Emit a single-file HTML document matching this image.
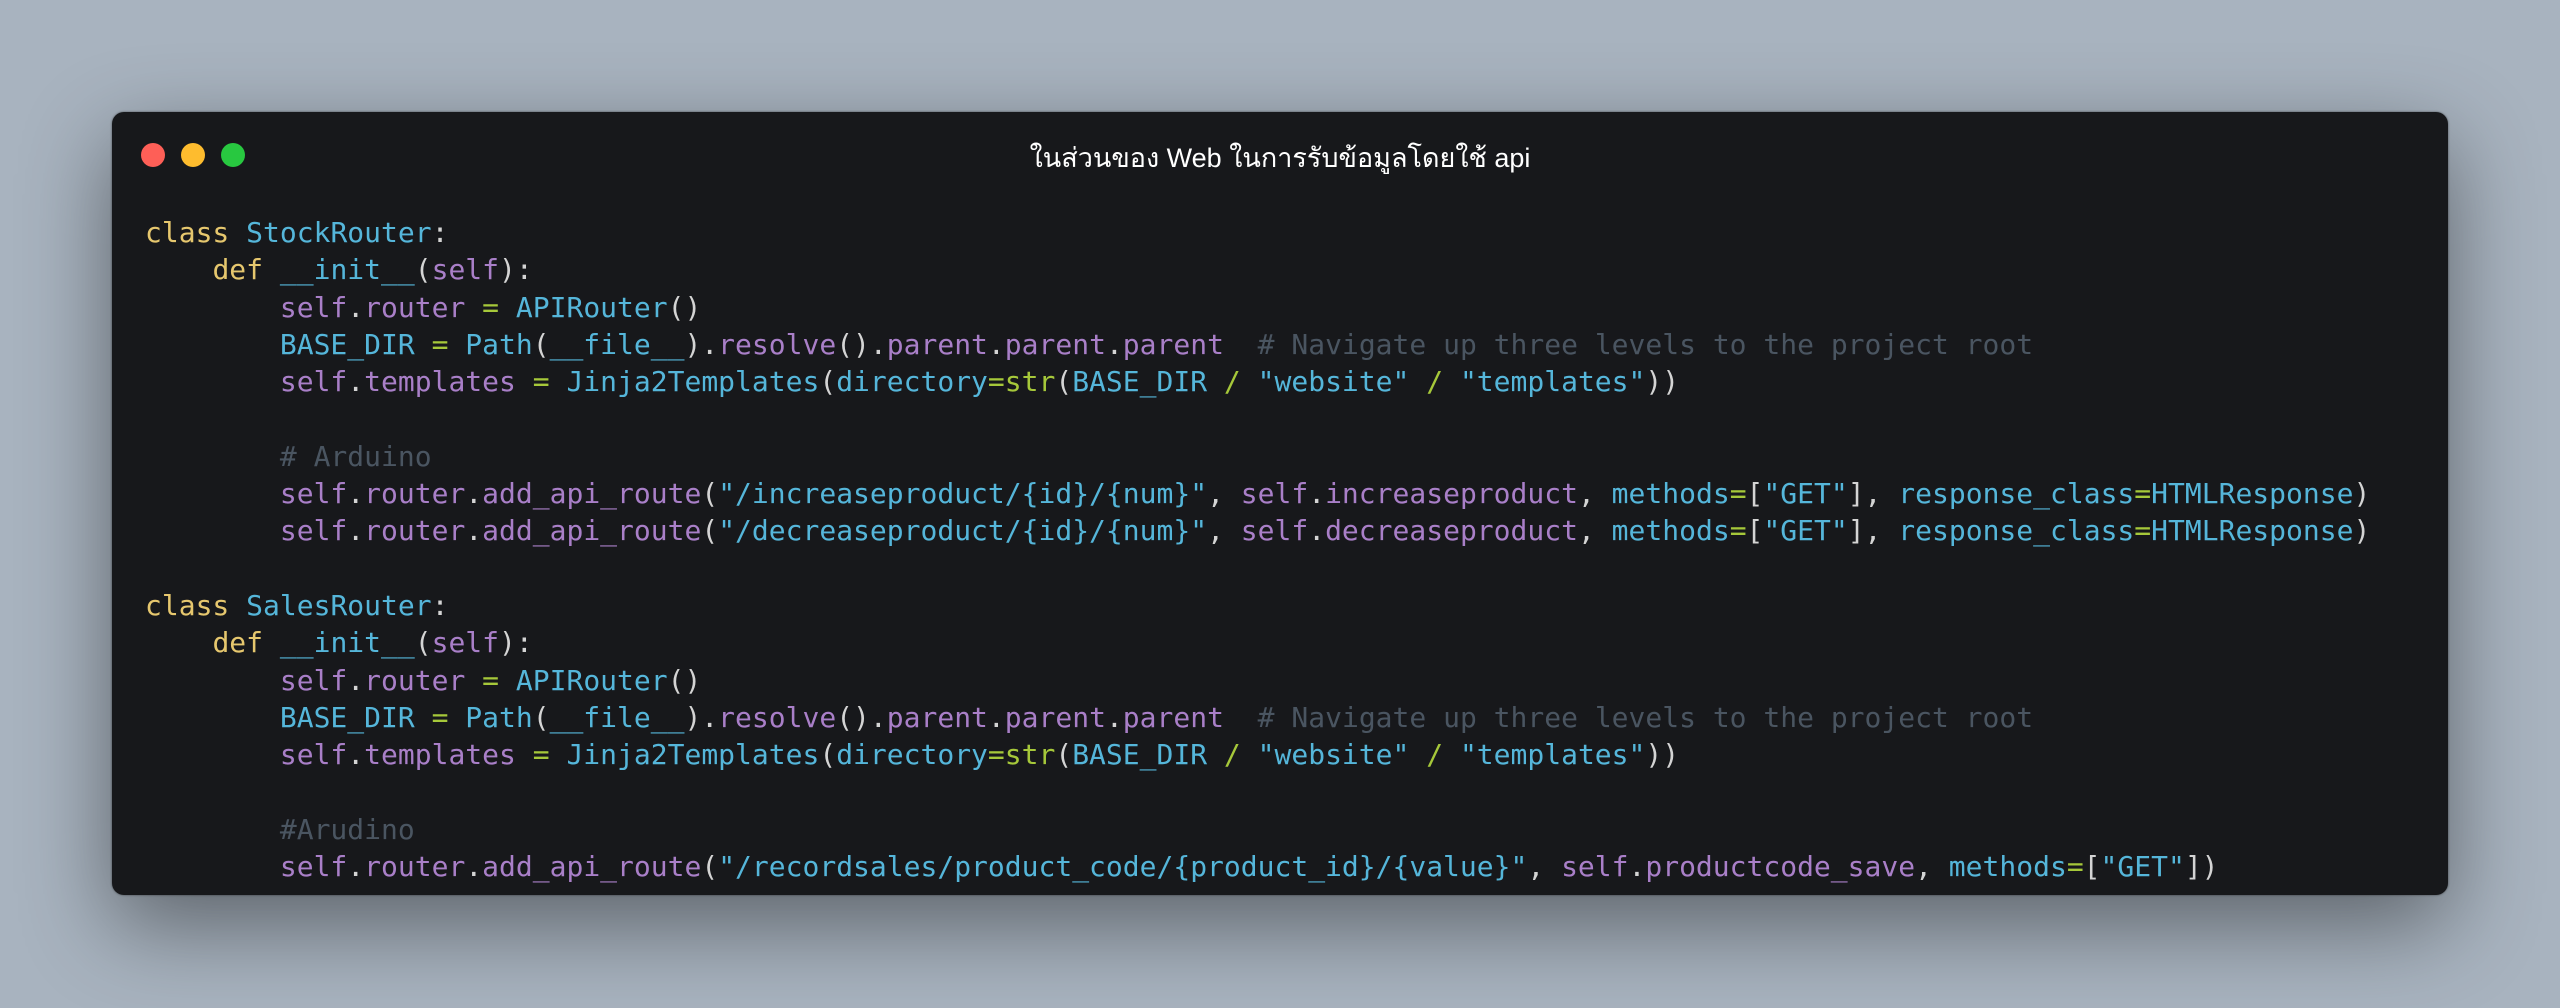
<!DOCTYPE html>
<html><head><meta charset="utf-8"><style>
html,body{margin:0;padding:0}
body{width:2560px;height:1008px;background:#a8b3bf;position:relative;overflow:hidden}
.win{position:absolute;left:112px;top:112px;width:2336px;height:783px;background:#17181b;border-radius:12px;box-shadow:0 30px 90px rgba(0,0,0,.45),0 0 2px rgba(0,0,0,.5)}
.dot{position:absolute;top:143px;width:24px;height:24px;border-radius:50%}
.title{position:absolute;left:0;width:2560px;top:136px;text-align:center;color:#fff;font:27px "Liberation Sans","Noto Sans CJK SC",sans-serif}
pre{position:absolute;left:145px;top:214px;margin:0;font-family:"DejaVu Sans Mono","Liberation Mono",monospace;font-size:28px;line-height:37.3px;color:#d4d4d4}
.k{color:#e6c76e}.c{color:#55b6da}.p{color:#a97fc8}.o{color:#a6c83a}.m{color:#4a5561}.w{color:#d4d4d4}.s{color:#55b6da}
</style></head><body>
<div class="win"></div>
<div class="dot" style="left:141px;background:#fe5f57"></div>
<div class="dot" style="left:181px;background:#febc2e"></div>
<div class="dot" style="left:221px;background:#28c840"></div>
<div class="title">ในส่วนของ Web ในการรับข้อมูลโดยใช้ api</div>
<pre><span class="k">class</span> <span class="c">StockRouter</span>:
    <span class="k">def</span> <span class="c">__init__</span>(<span class="p">self</span>):
        <span class="p">self</span>.<span class="p">router</span> <span class="o">=</span> <span class="c">APIRouter</span>()
        <span class="c">BASE_DIR</span> <span class="o">=</span> <span class="c">Path</span>(<span class="c">__file__</span>).<span class="p">resolve</span>().<span class="p">parent</span>.<span class="p">parent</span>.<span class="p">parent</span>  <span class="m"># Navigate up three levels to the project root</span>
        <span class="p">self</span>.<span class="p">templates</span> <span class="o">=</span> <span class="c">Jinja2Templates</span>(<span class="c">directory</span><span class="o">=</span><span class="o">str</span>(<span class="c">BASE_DIR</span> <span class="o">/</span> <span class="s">"website"</span> <span class="o">/</span> <span class="s">"templates"</span>))

        <span class="m"># Arduino</span>
        <span class="p">self</span>.<span class="p">router</span>.<span class="p">add_api_route</span>(<span class="s">"/increaseproduct/{id}/{num}"</span>, <span class="p">self</span>.<span class="p">increaseproduct</span>, <span class="c">methods</span><span class="o">=</span>[<span class="s">"GET"</span>], <span class="c">response_class</span><span class="o">=</span><span class="c">HTMLResponse</span>)
        <span class="p">self</span>.<span class="p">router</span>.<span class="p">add_api_route</span>(<span class="s">"/decreaseproduct/{id}/{num}"</span>, <span class="p">self</span>.<span class="p">decreaseproduct</span>, <span class="c">methods</span><span class="o">=</span>[<span class="s">"GET"</span>], <span class="c">response_class</span><span class="o">=</span><span class="c">HTMLResponse</span>)

<span class="k">class</span> <span class="c">SalesRouter</span>:
    <span class="k">def</span> <span class="c">__init__</span>(<span class="p">self</span>):
        <span class="p">self</span>.<span class="p">router</span> <span class="o">=</span> <span class="c">APIRouter</span>()
        <span class="c">BASE_DIR</span> <span class="o">=</span> <span class="c">Path</span>(<span class="c">__file__</span>).<span class="p">resolve</span>().<span class="p">parent</span>.<span class="p">parent</span>.<span class="p">parent</span>  <span class="m"># Navigate up three levels to the project root</span>
        <span class="p">self</span>.<span class="p">templates</span> <span class="o">=</span> <span class="c">Jinja2Templates</span>(<span class="c">directory</span><span class="o">=</span><span class="o">str</span>(<span class="c">BASE_DIR</span> <span class="o">/</span> <span class="s">"website"</span> <span class="o">/</span> <span class="s">"templates"</span>))

        <span class="m">#Arudino</span>
        <span class="p">self</span>.<span class="p">router</span>.<span class="p">add_api_route</span>(<span class="s">"/recordsales/product_code/{product_id}/{value}"</span>, <span class="p">self</span>.<span class="p">productcode_save</span>, <span class="c">methods</span><span class="o">=</span>[<span class="s">"GET"</span>])</pre>
</body></html>
